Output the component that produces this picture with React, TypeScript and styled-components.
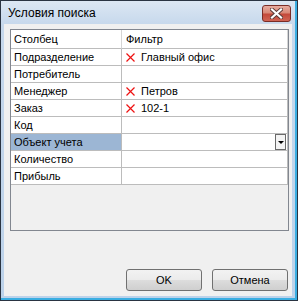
import React from 'react';
import styled, { createGlobalStyle } from 'styled-components';

const Global = createGlobalStyle`
  html, body { margin: 0; padding: 0; background: #fff; }
  body { width: 298px; height: 301px; overflow: hidden; }
`;

const Window = styled.div`
  box-sizing: border-box;
  width: 298px;
  height: 301px;
  display: flex;
  flex-direction: column;
  border: 1px solid #2a3442;
  background: linear-gradient(#dce7f3, #c6d8ec 24px, #bcd2ea);
  box-shadow: inset -2px -2px 0 #3aaee2;
  padding: 0 5px 4px 3px;
  font-family: "Liberation Sans", Arial, sans-serif;
`;

const TitleBar = styled.div`
  height: 23px;
  display: flex;
  align-items: center;
  padding-left: 4px;
`;

const Title = styled.span`
  font-size: 12px;
  color: #000;
  flex: 1;
`;

const CloseButton = styled.div`
  box-sizing: border-box;
  align-self: flex-start;
  margin-top: 4px;
  margin-right: 1px;
  width: 29px;
  height: 17px;
  border: 1px solid #7a2d27;
  border-radius: 3px;
  background: linear-gradient(#e7aca0 0%, #d98877 45%, #c4493a 55%, #d06454 100%);
  display: flex;
  align-items: center;
  justify-content: center;
`;

const Client = styled.div`
  flex: 1;
  background: #f0f0f0;
  display: flex;
  flex-direction: column;
  padding: 5px 3px 5px 6px;
`;

const Grid = styled.div`
  box-sizing: border-box;
  height: 202px;
  border: 1px solid #828790;
  background: #f0f0f0;
  display: flex;
  flex-direction: column;
`;

const Row = styled.div<{ $header?: boolean }>`
  display: grid;
  grid-template-columns: 111px 166px;
  height: ${(p) => (p.$header ? 19 : 17)}px;
`;

const Cell = styled.div<{ $selected?: boolean; $header?: boolean; $first?: boolean }>`
  box-sizing: border-box;
  border-right: 1px solid ${(p) => (p.$header ? '#d5d5d5' : '#bcbcbc')};
  border-bottom: 1px solid #bcbcbc;
  background: ${(p) => (p.$selected ? '#9cb6d4' : '#fff')};
  font-size: 11px;
  color: #000;
  display: flex;
  align-items: center;
  padding-left: ${(p) => (p.$first ? 3 : 4)}px;
  white-space: nowrap;
  overflow: hidden;
`;

const FilterMark = styled.svg`
  width: 9px;
  height: 9px;
  margin-right: 6px;
  flex: none;
`;

const DropButton = styled.div`
  box-sizing: border-box;
  margin-left: auto;
  margin-right: 1px;
  align-self: stretch;
  width: 11px;
  border: 1px solid #6a6a6a;
  background: #f4f4f4;
  display: flex;
  align-items: center;
  justify-content: center;
`;

const Arrow = styled.div`
  width: 0;
  height: 0;
  border-left: 3px solid transparent;
  border-right: 3px solid transparent;
  border-top: 3px solid #000;
`;

const Footer = styled.div`
  margin-top: 38px;
  display: flex;
  justify-content: flex-end;
  gap: 10px;
  padding-right: 1px;
`;

const Button = styled.div`
  box-sizing: border-box;
  width: 76px;
  height: 22px;
  border: 1px solid #707070;
  border-radius: 3px;
  background: linear-gradient(#f2f2f2 0%, #ebebeb 50%, #dddddd 50%, #cfcfcf 100%);
  font-size: 11px;
  color: #000;
  display: flex;
  align-items: center;
  justify-content: center;
`;

const rows: { name: string; filter?: string; selected?: boolean }[] = [
  { name: 'Подразделение', filter: 'Главный офис' },
  { name: 'Потребитель' },
  { name: 'Менеджер', filter: 'Петров' },
  { name: 'Заказ', filter: '102-1' },
  { name: 'Код' },
  { name: 'Объект учета', selected: true },
  { name: 'Количество' },
  { name: 'Прибыль' },
];

const Mark = () => (
  <FilterMark viewBox="0 0 9 9">
    <path d="M0.5 0.5 L8.5 8.5 M8.5 0.5 L0.5 8.5" stroke="#ee1111" strokeWidth="1.2" fill="none" />
  </FilterMark>
);

export default function App() {
  return (
    <>
      <Global />
      <Window>
        <TitleBar>
          <Title>Условия поиска</Title>
          <CloseButton>
            <svg width="13" height="11" viewBox="0 0 13 11">
              <path d="M2 1.5 L11 9.5 M11 1.5 L2 9.5" stroke="#5a3a38" strokeWidth="4" strokeLinecap="square" fill="none" />
              <path d="M2 1.5 L11 9.5 M11 1.5 L2 9.5" stroke="#fff" strokeWidth="2.2" strokeLinecap="square" fill="none" />
            </svg>
          </CloseButton>
        </TitleBar>
        <Client>
          <Grid>
            <Row $header>
              <Cell $header $first>Столбец</Cell>
              <Cell $header>Фильтр</Cell>
            </Row>
            {rows.map((r) => (
              <Row key={r.name}>
                <Cell $first $selected={r.selected}>{r.name}</Cell>
                <Cell>
                  {r.filter && (
                    <>
                      <Mark />
                      {r.filter}
                    </>
                  )}
                  {r.selected && (
                    <DropButton>
                      <Arrow />
                    </DropButton>
                  )}
                </Cell>
              </Row>
            ))}
          </Grid>
          <Footer>
            <Button>OK</Button>
            <Button>Отмена</Button>
          </Footer>
        </Client>
      </Window>
    </>
  );
}
